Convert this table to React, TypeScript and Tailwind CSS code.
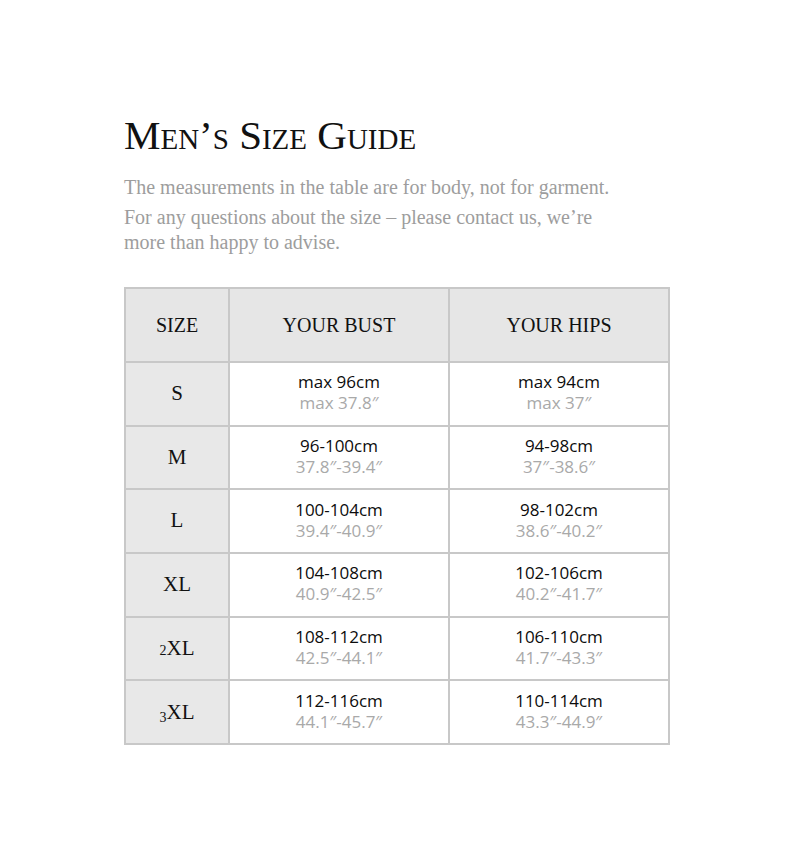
const rows = [
  { size: "S", bust: ["max 96cm", "max 37.8″"], hips: ["max 94cm", "max 37″"] },
  { size: "M", bust: ["96-100cm", "37.8″-39.4″"], hips: ["94-98cm", "37″-38.6″"] },
  { size: "L", bust: ["100-104cm", "39.4″-40.9″"], hips: ["98-102cm", "38.6″-40.2″"] },
  { size: "XL", bust: ["104-108cm", "40.9″-42.5″"], hips: ["102-106cm", "40.2″-41.7″"] },
  { size: "2XL", bust: ["108-112cm", "42.5″-44.1″"], hips: ["106-110cm", "41.7″-43.3″"] },
  { size: "3XL", bust: ["112-116cm", "44.1″-45.7″"], hips: ["110-114cm", "43.3″-44.9″"] },
];

const serif = { fontFamily: '"Liberation Serif", "DejaVu Serif", serif' };
const sans = { fontFamily: '"Open Sans", "Noto Sans", sans-serif' };

function SizeLabel({ size }: { size: string }) {
  if (size === "2XL") {
    return (
      <span>
        <span className="text-[14px]">2</span>XL
      </span>
    );
  }
  if (size === "3XL") {
    return (
      <span>
        <span className="relative top-[3px] text-[14px]">3</span>XL
      </span>
    );
  }
  return <span>{size}</span>;
}

function Measure({ v }: { v: string[] }) {
  return (
    <td className="border-2 border-[#c8c8c8] bg-white pb-[3px] text-center align-middle" style={sans}>
      <div className="text-[17px] leading-[21px] text-[#0c0c0c]">{v[0]}</div>
      <div className="text-[17px] leading-[21px] text-[#a9a9a9]">{v[1]}</div>
    </td>
  );
}

export default function App() {
  return (
    <main className="min-h-screen bg-white">
      <div className="mx-auto w-[546px] pt-[111px]">
        <h1 className="text-[41px] leading-[48px] text-[#111] [font-variant:small-caps]" style={serif}>
          Men’s Size Guide
        </h1>
        <div className="mt-[16px] text-[20px] leading-[25px] text-[#9d9d9d]" style={serif}>
          <p>The measurements in the table are for body, not for garment.</p>
          <p className="mt-[5px] w-[500px]">
            For any questions about the size – please contact us, we’re more than happy to advise.
          </p>
        </div>
        <table className="mt-[32px] w-[544px] border-collapse border-2 border-[#c8c8c8] table-fixed">
          <colgroup>
            <col className="w-[104px]" />
            <col className="w-[220px]" />
            <col className="w-[220px]" />
          </colgroup>
          <thead>
            <tr className="h-[74px] bg-[#e6e6e6] text-[20px] text-[#111]" style={serif}>
              <th className="border-2 border-[#c8c8c8] font-normal">SIZE</th>
              <th className="border-2 border-[#c8c8c8] font-normal">YOUR BUST</th>
              <th className="border-2 border-[#c8c8c8] font-normal">YOUR HIPS</th>
            </tr>
          </thead>
          <tbody>
            {rows.map((r) => (
              <tr key={r.size} className="h-[63.7px]">
                <td className="border-2 border-[#c8c8c8] bg-[#e8e8e8] text-center text-[21px] text-[#111]" style={serif}>
                  <SizeLabel size={r.size} />
                </td>
                <Measure v={r.bust} />
                <Measure v={r.hips} />
              </tr>
            ))}
          </tbody>
        </table>
      </div>
    </main>
  );
}
